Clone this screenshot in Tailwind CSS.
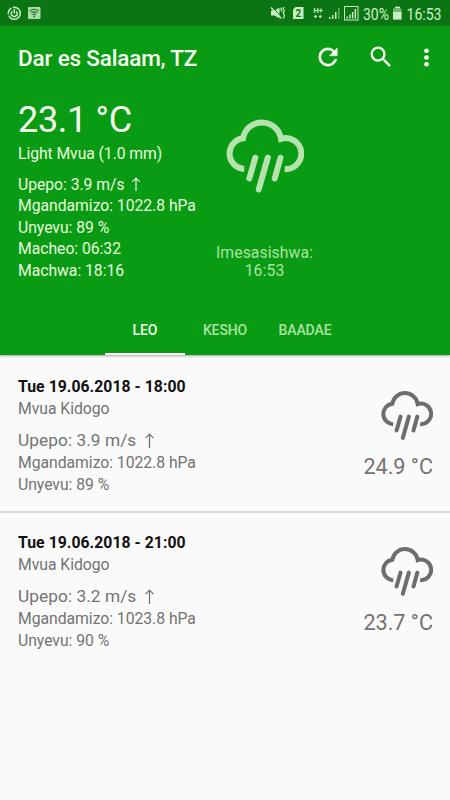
<!DOCTYPE html>
<html lang="sw">
<head>
<meta charset="utf-8">
<title>Dar es Salaam, TZ</title>
<script src="https://cdn.jsdelivr.net/npm/@tailwindcss/browser@4"></script>
</head>
<body class="w-[450px] h-[800px] overflow-hidden bg-[#fafafa] font-['Roboto',sans-serif] flex flex-col">
<svg class="hidden">
  <symbol id="rain" viewBox="226 118 78 76">
    <g fill="none" stroke="currentColor">
      <path stroke-width="6" d="M244.300 169A15.420 15.420 0 0 1 243 138.300A19.250 19.250 0 0 1 281 138.800A15.500 15.500 0 1 1 284.700 169"/>
      <path stroke-width="6" stroke-linecap="round" d="M255.300 157.700L249.300 178.500M267.800 157.700L258.700 189.500M280.500 157.700L274.700 178.500"/>
    </g>
  </symbol>
  <symbol id="arrow" viewBox="0 0 10 14"><path d="M5 14V1.200M1.300 4.800L5 1L8.700 4.800" fill="none" stroke="currentColor" stroke-width="1.200"/></symbol>
</svg>

<header class="h-[355px] shrink-0 bg-[#0a9b14] flex flex-col shadow-[0_1px_2px_rgba(0,0,0,0.35)]">
  <div class="h-[26px] shrink-0 bg-[#0a7512] text-[#c9f0c5] flex items-center">
    <svg class="w-[450px] h-[26px]" viewBox="0 0 450 26">
      <g fill="none" stroke="currentColor" stroke-width="1.500">
        <circle cx="14.300" cy="13.300" r="6" stroke-dasharray="16 1.500 7 1.500"/>
        <path d="M12.300 11.300A3 3 0 1 0 16.300 11.300M14.300 9V13.500"/>
      </g>
      <rect x="28" y="7" width="12.500" height="12" rx="1" fill="#a9dba7"/>
      <g fill="none" stroke="#26742b" stroke-width="1.100"><path d="M29.800 11Q34.200 7.500 38.700 11M31.300 13Q34.200 10.700 37.200 13M32.700 14.700Q34.200 13.600 35.800 14.700"/></g>
      <circle cx="34.200" cy="16.500" r=".9" fill="#26742b"/>
      <path fill="currentColor" d="M271 10.500H274.500L279.500 7.500V18.500L274.500 15.500H271Z"/>
      <path fill="none" stroke="#0a7512" stroke-width="1" d="M272 6.800L282 17.300"/>
      <path fill="none" stroke="currentColor" stroke-width="1.200" d="M271 7.500L281.500 18.500M281.500 7.500L281 9.500L282 11.500M284 7L283.200 9L284.400 11L283.200 13L284.400 15L283.500 18.500"/>
      <path fill="currentColor" d="M295.500 7H303.500V19H293V9.500Z"/>
      <text x="298.400" y="17" text-anchor="middle" font-size="10" font-weight="700" fill="#0a7512">2</text>
      <text x="313.500" y="12.700" font-size="7.500" font-weight="700" fill="currentColor">H+</text>
      <path fill="currentColor" d="M313.900 16.500L315.500 14.800L317.100 16.500L315.500 18.300ZM318.700 16.500L320.300 14.800L321.900 16.500L320.300 18.300Z"/>
      <path fill="currentColor" d="M329 17h1.500v2h-1.500zM332 15h1.500v4H332zM335 12h1.500v7H335z"/>
      <path fill="#5eab5d" d="M338 8h1.500v11H338z"/>
      <rect x="344.500" y="6.500" width="13.500" height="13.500" fill="none" stroke="currentColor" stroke-width="1"/>
      <path fill="currentColor" d="M346.500 16.500h1.500v2h-1.500zM349.200 14.500h1.500v4h-1.500zM351.900 12h1.500v6.500h-1.500zM354.600 9h1.500v9.500h-1.500z"/>
      <text x="363" y="19.500" font-size="16" textLength="26" lengthAdjust="spacingAndGlyphs" fill="currentColor">30%</text>
      <path fill="#76b976" d="M395 6.800H400V8.500H401.500V19.500H393V8.500H395Z"/>
      <path fill="currentColor" d="M393 12H401.500V19.500H393ZM395 6.800H400V8H395Z"/>
      <text x="406.500" y="19.500" font-size="16" textLength="35" lengthAdjust="spacingAndGlyphs" fill="currentColor">16:53</text>
    </svg>
  </div>

  <div class="h-[63px] shrink-0 pl-[18px] flex items-center justify-between text-[#f6fff0]">
    <h1 class="text-[22.5px] leading-[28px] font-medium tracking-[-0.18px]">Dar es Salaam, TZ</h1>
    <div class="flex items-center pr-[10.500px]">
      <svg class="w-[28px] h-[28px] mr-[24.500px] -mt-[2px]" viewBox="0 0 24 24" fill="currentColor"><path d="M17.650 6.350A7.960 7.960 0 0 0 12 4a8 8 0 1 0 7.730 10h-2.080A6 6 0 1 1 12 6c1.660 0 3.140.690 4.220 1.780L13 11h7V4z" stroke="currentColor" stroke-width=".3"/></svg>
      <svg class="w-[28px] h-[28px] mr-[18px] -mt-[2px]" viewBox="0 0 24 24" fill="currentColor"><path d="M15.500 14h-.79l-.28-.27A6.470 6.470 0 0 0 16 9.500 6.500 6.500 0 1 0 9.500 16c1.610 0 3.090-.59 4.230-1.570l.27.280v.79l5 4.990L20.490 19zm-6 0a4.500 4.500 0 1 1 0-9 4.500 4.500 0 0 1 0 9z"/></svg>
      <svg class="w-[27px] h-[27px] -mt-[1px]" viewBox="0 0 24 24" fill="currentColor"><circle cx="12" cy="6" r="2.100"/><circle cx="12" cy="12" r="2.100"/><circle cx="12" cy="18" r="2.100"/></svg>
    </div>
  </div>

  <div class="h-[215px] shrink-0 pl-[18px] flex">
    <div class="w-[193px] pt-[10px] text-[15.75px] leading-[21.600px] tracking-[-0.04px] text-[#e6fbdc] whitespace-nowrap">
      <div class="text-[36px] leading-[43px] tracking-[-0.3px] text-[#f6fff0]">23.1 °C</div>
      <div class="pt-[1px] tracking-[-0.08px]">Light Mvua (1.0 mm)</div>
      <div class="pt-[9px]">
        <div class="flex items-center">Upepo: 3.9 m/s<svg class="w-[10px] h-[14px] ml-[6px]"><use href="#arrow"/></svg></div>
        <div>Mgandamizo: 1022.8 hPa</div>
        <div>Unyevu: 89 %</div>
        <div>Macheo: 06:32</div>
        <div>Machwa: 18:16</div>
      </div>
    </div>
    <div class="w-[107px] pt-[29px] flex flex-col items-center text-[#b4e3ae]">
      <svg class="w-[78px] h-[76px]"><use href="#rain"/></svg>
      <div class="mt-[50px] text-[15.75px] leading-[18px] tracking-[0.08px] text-center text-[#aae3a0]">Imesasishwa:<br>16:53</div>
    </div>
  </div>

  <nav class="h-[51px] shrink-0 flex justify-center text-[14px] leading-[52px] font-medium tracking-[-0.12px] text-center text-[#aae3a0]">
    <div class="h-[51px] w-[80px] text-[#f6fff0] border-b-2 border-white">LEO</div>
    <div class="w-[80px]">KESHO</div>
    <div class="w-[80px]">BAADAE</div>
  </nav>
</header>

<main class="text-[#737373] text-[15.75px] leading-[21.600px]">
  <section class="h-[158px] pt-[21px] pl-[18px] pr-[17px] flex justify-between border-b-2 border-[#dcdcdc]">
    <div class="tracking-[-0.04px]">
      <h2 class="font-bold text-[#111] tracking-[0.05px]">Tue 19.06.2018 - 18:00</h2>
      <div>Mvua Kidogo</div>
      <div class="mt-[9px] flex items-center text-[17.300px] leading-[24px] tracking-[0.05px]">Upepo: 3.9 m/s<svg class="w-[11px] h-[15px] ml-[8px]"><use href="#arrow"/></svg></div>
      <div>Mgandamizo: 1022.8 hPa</div>
      <div>Unyevu: 89 %</div>
    </div>
    <div class="pt-[14px] flex flex-col items-end">
      <svg class="w-[52px] h-[51px] text-[#6d6d6d]"><use href="#rain"/></svg>
      <div class="mt-[12px] text-[21.600px] leading-[28px]">24.9 °C</div>
    </div>
  </section>
  <section class="h-[156px] pt-[19px] pl-[18px] pr-[17px] flex justify-between">
    <div class="tracking-[-0.04px]">
      <h2 class="font-bold text-[#111] tracking-[0.05px]">Tue 19.06.2018 - 21:00</h2>
      <div>Mvua Kidogo</div>
      <div class="mt-[9px] flex items-center text-[17.300px] leading-[24px] tracking-[0.05px]">Upepo: 3.2 m/s<svg class="w-[11px] h-[15px] ml-[8px]"><use href="#arrow"/></svg></div>
      <div>Mgandamizo: 1023.8 hPa</div>
      <div>Unyevu: 90 %</div>
    </div>
    <div class="pt-[14px] flex flex-col items-end">
      <svg class="w-[52px] h-[51px] text-[#6d6d6d]"><use href="#rain"/></svg>
      <div class="mt-[12px] text-[21.600px] leading-[28px]">23.7 °C</div>
    </div>
  </section>
</main>
</body>
</html>
